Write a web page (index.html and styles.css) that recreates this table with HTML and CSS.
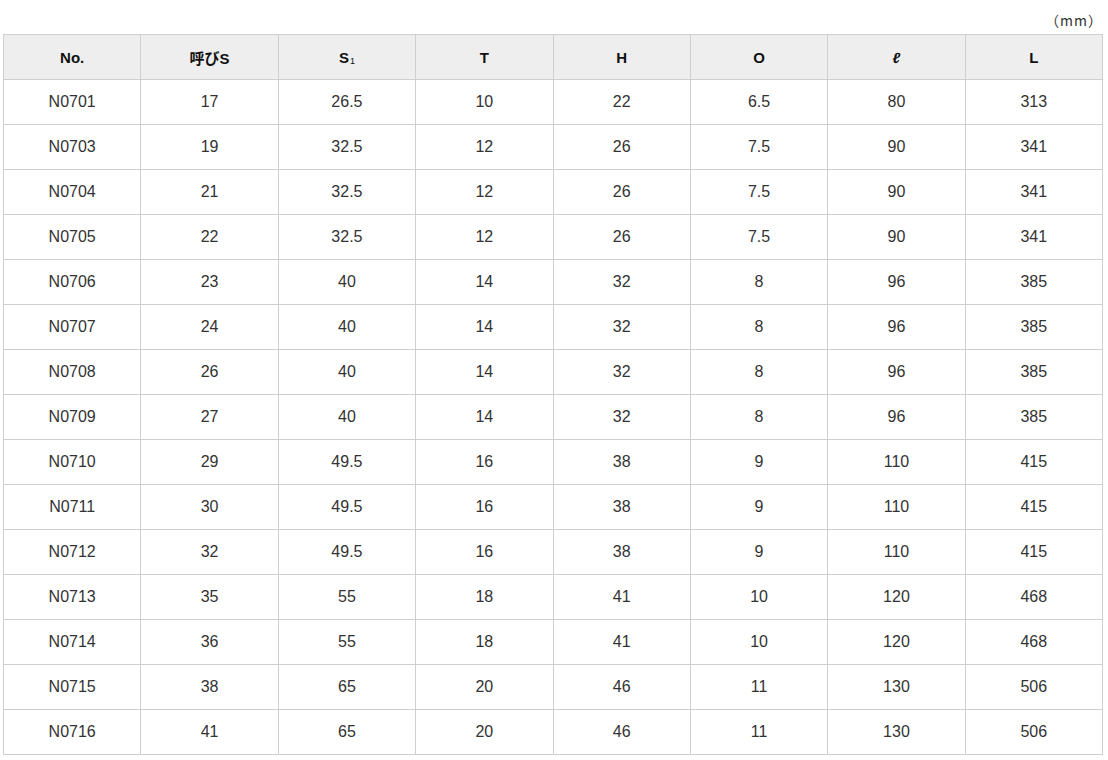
FILE: index.html
```html
<!DOCTYPE html>
<html lang="ja">
<head>
<meta charset="utf-8">
<link rel="stylesheet" href="styles.css">
</head>
<body>
<div class="wrap">
  <div class="unit">（mm）</div>
  <table class="spec">
    <thead>
      <tr><th>No.</th><th>呼びS</th><th>S<span class="sub">1</span></th><th>T</th><th>H</th><th>O</th><th class="ell">ℓ</th><th>L</th></tr>
    </thead>
    <tbody>
      <tr><td>N0701</td><td>17</td><td>26.5</td><td>10</td><td>22</td><td>6.5</td><td>80</td><td>313</td></tr>
      <tr><td>N0703</td><td>19</td><td>32.5</td><td>12</td><td>26</td><td>7.5</td><td>90</td><td>341</td></tr>
      <tr><td>N0704</td><td>21</td><td>32.5</td><td>12</td><td>26</td><td>7.5</td><td>90</td><td>341</td></tr>
      <tr><td>N0705</td><td>22</td><td>32.5</td><td>12</td><td>26</td><td>7.5</td><td>90</td><td>341</td></tr>
      <tr><td>N0706</td><td>23</td><td>40</td><td>14</td><td>32</td><td>8</td><td>96</td><td>385</td></tr>
      <tr><td>N0707</td><td>24</td><td>40</td><td>14</td><td>32</td><td>8</td><td>96</td><td>385</td></tr>
      <tr><td>N0708</td><td>26</td><td>40</td><td>14</td><td>32</td><td>8</td><td>96</td><td>385</td></tr>
      <tr><td>N0709</td><td>27</td><td>40</td><td>14</td><td>32</td><td>8</td><td>96</td><td>385</td></tr>
      <tr><td>N0710</td><td>29</td><td>49.5</td><td>16</td><td>38</td><td>9</td><td>110</td><td>415</td></tr>
      <tr><td>N0711</td><td>30</td><td>49.5</td><td>16</td><td>38</td><td>9</td><td>110</td><td>415</td></tr>
      <tr><td>N0712</td><td>32</td><td>49.5</td><td>16</td><td>38</td><td>9</td><td>110</td><td>415</td></tr>
      <tr><td>N0713</td><td>35</td><td>55</td><td>18</td><td>41</td><td>10</td><td>120</td><td>468</td></tr>
      <tr><td>N0714</td><td>36</td><td>55</td><td>18</td><td>41</td><td>10</td><td>120</td><td>468</td></tr>
      <tr><td>N0715</td><td>38</td><td>65</td><td>20</td><td>46</td><td>11</td><td>130</td><td>506</td></tr>
      <tr><td>N0716</td><td>41</td><td>65</td><td>20</td><td>46</td><td>11</td><td>130</td><td>506</td></tr>
    </tbody>
  </table>
</div>
</body>
</html>
```
FILE: styles.css
```css
html, body {
  margin: 0;
  padding: 0;
  background: #fff;
}
body {
  font-family: "Liberation Sans", "Noto Sans CJK JP", sans-serif;
  color: #222;
}
.wrap {
  padding: 0 5px 0 3px;
}
.unit {
  height: 24px;
  padding-top: 10px;
  line-height: 20px;
  font-family: "Noto Sans CJK JP", sans-serif;
  font-size: 14px;
  letter-spacing: 1px;
  text-align: right;
  padding-right: 0;
  color: #333;
}
.spec {
  width: 100%;
  border-collapse: collapse;
  table-layout: fixed;
}
.spec th, .spec td {
  border: 1px solid #cfcfcf;
  height: 44px;
  padding: 0;
  text-align: center;
  vertical-align: middle;
  font-size: 16px;
}
.spec th {
  background: #eeeeee;
  font-weight: bold;
  font-size: 15px;
  color: #111;
}
.spec td {
  color: #333;
}
.sub {
  font-size: 9px;
  font-weight: normal;
  vertical-align: -1px;
  margin-left: 1px;
}
.ell {
  font-style: italic;
}
```
